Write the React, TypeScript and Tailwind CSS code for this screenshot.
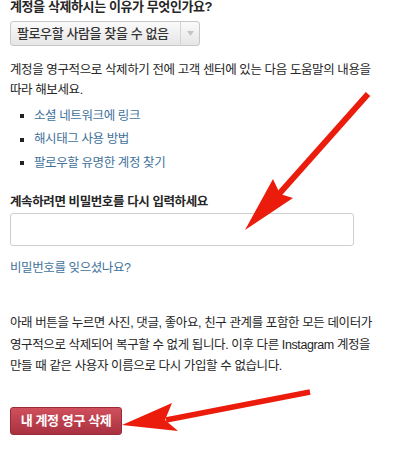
const FONT = "font-['Liberation_Sans','Noto_Sans_CJK_KR',sans-serif]";

const HELP_LINKS = ["소셜 네트워크에 링크", "해시태그 사용 방법", "팔로우할 유명한 계정 찾기"];

function Arrows() {
  return (
    <svg className="pointer-events-none absolute inset-0" width="400" height="449" viewBox="0 0 400 449">
      {/* arrow to password field */}
      <line x1="368" y1="94" x2="279" y2="194" stroke="#ec1c0c" strokeWidth="6" />
      <polygon points="245,230 273,179 280,194 293,198" fill="#ec1c0c" />
      {/* arrow to delete button */}
      <line x1="310" y1="392" x2="166" y2="420" stroke="#ec1c0c" strokeWidth="5.5" />
      <polygon points="122,425 172,403 165,420 178,431" fill="#ec1c0c" />
    </svg>
  );
}

export default function App() {
  return (
    <div className={`relative h-[449px] w-[400px] overflow-hidden bg-white text-[12.5px] tracking-[-0.4px] text-[#262626] ${FONT}`}>
      <div className="-mt-[3px] px-[10px]">
        <h2 className="text-[13px] font-bold leading-[20px]">계정을 삭제하시는 이유가 무엇인가요?</h2>

        {/* reason select */}
        <div className="mt-[4px] flex h-[25px] w-[190px] items-stretch rounded-[3px] border border-[#c8c8c8] bg-gradient-to-b from-[#fafafa] to-[#e6e6e6]">
          <span className="flex flex-1 items-center pl-[6px] text-[13px] font-medium text-[#333]">팔로우할 사람을 찾을 수 없음</span>
          <span className="flex w-[19px] items-center justify-center border-l border-[#d4d4d4]">
            <svg width="7" height="5" viewBox="0 0 7 5">
              <polygon points="0,0 7,0 3.5,5" fill="#c4c4c4" />
            </svg>
          </span>
        </div>

        <p className="mt-[14px] whitespace-nowrap leading-[20px]">
          계정을 영구적으로 삭제하기 전에 고객 센터에 있는 다음 도움말의 내용을
          <br />
          따라 해보세요.
        </p>

        <ul className="mt-[6px] flex flex-col gap-[3.5px] pl-[10px]">
          {HELP_LINKS.map((t) => (
            <li key={t} className="flex h-[20px] items-center gap-[10px]">
              <span className="h-[4px] w-[4px] bg-[#222]" />
              <a className="text-[#3f729b]">{t}</a>
            </li>
          ))}
        </ul>

        <label className="mt-[19px] block font-bold leading-[20px]">계속하려면 비밀번호를 다시 입력하세요</label>
        <div className="mt-[1px] h-[33px] w-[344px] rounded-[3px] border border-[#cfcfcf] bg-white" />

        <a className="mt-[12px] block leading-[20px] text-[#3f729b]">비밀번호를 잊으셨나요?</a>

        <p className="mt-[35px] whitespace-nowrap leading-[21.5px]">
          아래 버튼을 누르면 사진, 댓글, 좋아요, 친구 관계를 포함한 모든 데이터가
          <br />
          영구적으로 삭제되어 복구할 수 없게 됩니다. 이후 다른 Instagram 계정을
          <br />
          만들 때 같은 사용자 이름으로 다시 가입할 수 없습니다.
        </p>

        <button
          type="button"
          className="mt-[29px] flex h-[28px] w-[112px] items-center justify-center rounded-[3px] border border-[#9a2a36] bg-gradient-to-b from-[#d0505d] to-[#a93140] text-[13px] font-bold text-white"
        >
          내 계정 영구 삭제
        </button>
      </div>
      <Arrows />
    </div>
  );
}
